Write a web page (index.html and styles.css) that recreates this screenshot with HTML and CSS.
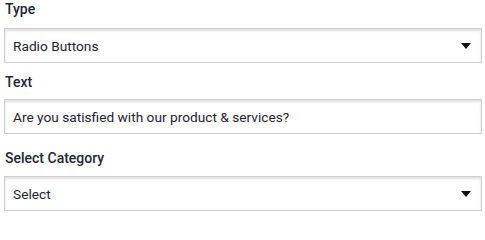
FILE: index.html
```html
<!DOCTYPE html>
<html>
<head>
<meta charset="utf-8">
<link rel="stylesheet" href="styles.css">
</head>
<body>
<form class="form">
  <div class="group group-first">
    <label class="label">Type</label>
    <div class="field select">
      <span class="value">Radio Buttons</span>
      <span class="caret"></span>
    </div>
  </div>
  <div class="group group-text">
    <label class="label">Text</label>
    <div class="field">
      <span class="value">Are you satisfied with our product &amp; services?</span>
    </div>
  </div>
  <div class="group group-last">
    <label class="label">Select Category</label>
    <div class="field select">
      <span class="value">Select</span>
      <span class="caret"></span>
    </div>
  </div>
</form>
</body>
</html>
```
FILE: styles.css
```css
html, body {
  margin: 0;
  padding: 0;
  background: #ffffff;
}
body {
  font-family: Roboto, "Liberation Sans", sans-serif;
  color: #222536;
}
.form {
  display: flex;
  flex-direction: column;
  padding: 0 3px 0 4px;
}
.group {
  display: flex;
  flex-direction: column;
  gap: 8px;
}
.group-first {
  gap: 10px;
  margin-bottom: 10px;
}
.group-text {
  margin-bottom: 15px;
}
.group-last {
  gap: 9px;
}
.label {
  display: block;
  font-size: 14px;
  font-weight: 500;
  line-height: 18px;
  color: #23263a;
  padding-left: 1px;
}
.field {
  box-sizing: border-box;
  height: 35px;
  border: 1px solid #cfcfcf;
  background: #ffffff;
  box-shadow: inset 0 2px 3px rgba(0, 0, 0, 0.13);
  display: flex;
  align-items: center;
  justify-content: space-between;
  padding: 0 10px 0 8px;
}
.value {
  font-size: 13.7px;
  color: #1f2236;
  line-height: 16px;
}
.caret {
  width: 0;
  height: 0;
  border-left: 5px solid transparent;
  border-right: 5px solid transparent;
  border-top: 6px solid #111111;
}
```
